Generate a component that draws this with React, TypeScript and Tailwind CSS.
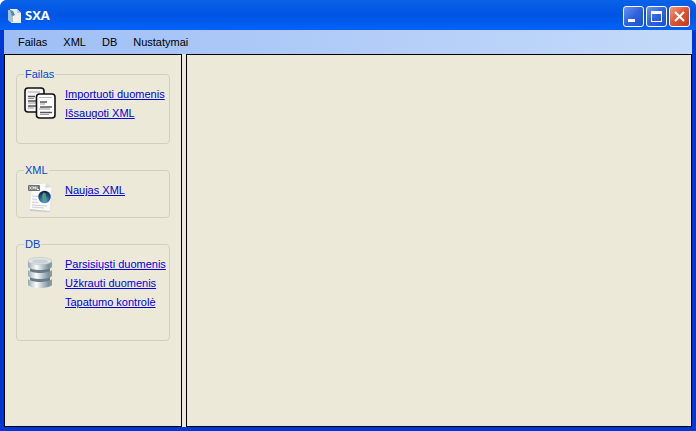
import type { ReactNode } from "react";

interface GroupProps {
  title: string;
  icon: ReactNode;
  links: string[];
  className: string;
}

const menuItems = ["Failas", "XML", "DB", "Nustatymai"];

const AppIcon = () => (
  <svg className="h-4 w-4" viewBox="0 0 16 16" aria-hidden="true">
    <path d="M3 1h7l4 4v10H4z" fill="#e9eee8" />
    <path d="M10 1v4h4z" fill="#b4cdde" />
    <path d="M1 2h3l3 3v9H3L1 12z" fill="#a4c2d2" />
    <path d="M3 2l3 1 2 4-3 1z" fill="#4f8cb4" />
    <path d="M6 8h7v6H6z" fill="#f3f1e6" />
  </svg>
);

const CopyIcon = () => (
  <svg className="h-8 w-8" viewBox="0 0 32 32" aria-hidden="true">
    <rect x="1" y="1" width="19" height="24" rx="3" fill="#f6f6f6" stroke="#111" strokeWidth="1.6" />
    <path d="M4 5h12" stroke="#aaa" />
    <path d="M4 9.500h7M4 14h9M4 19h9" stroke="#555" strokeWidth="1.6" />
    <path d="M4 11.500h6M4 16h8M4 21h6" stroke="#999" />
    <rect x="12.500" y="7" width="18.500" height="24" rx="3" fill="#fff" stroke="#111" strokeWidth="1.6" />
    <path d="M15 10.500h13" stroke="#bbb" />
    <path d="M16 15h7M16 20h12M16 25.500h12" stroke="#555" strokeWidth="1.6" />
    <path d="M16 17h5M15 22h11M16 27.500h9" stroke="#999" />
  </svg>
);

const XmlIcon = () => (
  <svg className="h-8 w-8" viewBox="0 0 32 32" aria-hidden="true">
    <defs>
      <radialGradient id="globe" cx="0.5" cy="0.8" r="0.75">
        <stop offset="0" stopColor="#58b0dc" />
        <stop offset="0.5" stopColor="#2a62a4" />
        <stop offset="1" stopColor="#101c50" />
      </radialGradient>
    </defs>
    <path d="M8 1l14-1 6 4-2 25-21-2z" fill="#fafaf8" stroke="#deded6" strokeWidth="0.6" />
    <path d="M22 0l-1 5 7-1z" fill="#dcdcd8" />
    <path d="M6 26l20 2v1l-20-1z" fill="#c9ccc8" />
    <path d="M8 13l6 .500M8 16l5 .500M8 19l6 .500M8 22l15 1M8 24l12 1" stroke="#c7cdd4" strokeWidth="0.9" />
    <rect x="4" y="2" width="12" height="6" rx="1" fill="#6f7371" />
    <path d="M5.500 3.500l2 3m0-3l-2 3M9 6.500v-3l1.200 2 1.200-2v3M13 3.500v3h2" stroke="#fff" strokeWidth="0.8" fill="none" />
    <circle cx="20.500" cy="14" r="6.200" fill="url(#globe)" />
    <path d="M19.500 9.500l2.500 1.500-.500 2 1 2-2 4-1.500-3-1-3z" fill="#59a05a" />
  </svg>
);

const DatabaseIcon = () => (
  <svg className="h-8 w-8" viewBox="0 0 32 32" aria-hidden="true">
    <defs>
      <linearGradient id="disk">
        <stop offset="0" stopColor="#94a5ae" />
        <stop offset="0.15" stopColor="#c5d0d6" />
        <stop offset="0.35" stopColor="#fbfdfd" />
        <stop offset="0.6" stopColor="#b9c7ce" />
        <stop offset="0.85" stopColor="#7f939f" />
        <stop offset="1" stopColor="#8b9ca5" />
      </linearGradient>
    </defs>
    <path d="M6 7v20c4 4 16 4 20 0V7z" fill="#6a7b85" />
    <path d="M4 22c4 4 20 4 24 0v6c-3 4-21 4-24 0z" fill="url(#disk)" />
    <path d="M4 13c4 4 20 4 24 0v6c-3 4-21 4-24 0z" fill="url(#disk)" />
    <path d="M4 4c4 4 20 4 24 0v6c-3 4-21 4-24 0z" fill="url(#disk)" />
    <ellipse cx="16" cy="4" rx="12" ry="3.500" fill="#dfe6e8" stroke="#b4c0c5" strokeWidth="0.6" />
    <ellipse cx="16" cy="4.500" rx="8" ry="2" fill="#c8d2d5" />
  </svg>
);

const Group = ({ title, icon, links, className }: GroupProps) => (
  <fieldset className={`min-w-0 rounded-[4px] border border-[#d0d0bf] px-[7px] ${className}`}>
    <legend className="px-px leading-[15px] text-[#0046d5]">{title}</legend>
    <div className="flex gap-[9px] pt-[3px]">
      <div className="w-8 shrink-0 pt-[2px]">{icon}</div>
      <ul>
        {links.map((link) => (
          <li key={link} className="leading-[19px]">
            <a href="#" className="whitespace-nowrap text-[#0000e0] underline">
              {link}
            </a>
          </li>
        ))}
      </ul>
    </div>
  </fieldset>
);

const captionButton =
  "flex h-[21px] w-[21px] items-center justify-center rounded-[3px] border border-white";

const App = () => {
  return (
    <div className="flex min-h-screen flex-col overflow-hidden rounded-t-[7px] bg-[#0046dc] font-['Liberation_Sans',sans-serif] text-[11px]">
      <header className="flex h-[30px] items-center justify-between bg-linear-to-b from-[#0a62e8] via-[#0054e3] to-[#0462fa] pr-[6px] pl-[7px]">
        <div className="flex items-center gap-[2px] pt-[2px]">
          <AppIcon />
          <h1 className="font-['Open_Sans',sans-serif] text-[13px] font-bold text-white">SXA</h1>
        </div>
        <div className="flex gap-[2px] pt-[2px]">
          <button aria-label="Minimize" className={`${captionButton} bg-linear-to-br from-[#6a92f0] via-[#2f62dc] to-[#1c50d0]`}>
            <svg className="h-[19px] w-[19px]" viewBox="0 0 19 19">
              <path d="M4 12h7v3H4z" fill="#fff" />
            </svg>
          </button>
          <button aria-label="Maximize" className={`${captionButton} bg-linear-to-br from-[#6a92f0] via-[#2f62dc] to-[#1c50d0]`}>
            <svg className="h-[19px] w-[19px]" viewBox="0 0 19 19">
              <path d="M4 4h11v11H4zM5 7v7h9V7z" fill="#fff" fillRule="evenodd" />
            </svg>
          </button>
          <button aria-label="Close" className={`${captionButton} bg-linear-to-br from-[#ee9a80] via-[#dd5231] to-[#c33c14]`}>
            <svg className="h-[19px] w-[19px]" viewBox="0 0 19 19">
              <path d="M5 5l9 9M14 5l-9 9" stroke="#fff" strokeWidth="2.2" />
            </svg>
          </button>
        </div>
      </header>
      <div className="flex flex-1 flex-col border-x-4 border-b-4 border-[#0038d8]">
        <nav className="flex h-6 items-center gap-4 bg-linear-to-r from-[#9ebef5] to-[#c4dafa] pl-[14px]">
          {menuItems.map((item) => (
            <button key={item} className="text-black">
              {item}
            </button>
          ))}
        </nav>
        <div className="flex flex-1 gap-1 bg-[#ece9d8]">
          <aside className="flex w-[178px] shrink-0 flex-col gap-[19px] border border-black px-[11px] pt-3">
            <Group title="Failas" icon={<CopyIcon />} links={["Importuoti duomenis", "Išsaugoti XML"]} className="min-h-[77px]" />
            <Group title="XML" icon={<XmlIcon />} links={["Naujas XML"]} className="min-h-[55px]" />
            <Group
              title="DB"
              icon={<DatabaseIcon />}
              links={["Parsisiųsti duomenis", "Užkrauti duomenis", "Tapatumo kontrolė"]}
              className="min-h-[104px]"
            />
          </aside>
          <main className="flex-1 border border-black" />
        </div>
      </div>
    </div>
  );
};

export default App;
